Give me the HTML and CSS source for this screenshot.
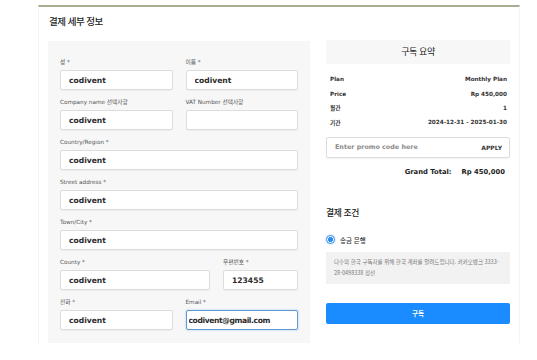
FILE: index.html
```html
<!DOCTYPE html>
<html lang="ko">
<head>
    <meta charset="UTF-8">
    <meta name="viewport" content="width=device-width, initial-scale=1.0">
    <title>결제 세부 정보</title>
    <link rel="stylesheet" href="styles.css">
</head>
<body>
    <div class="page">
        <h1 class="title">결제 세부 정보</h1>
        <div class="content">
            <form class="form-panel">
                <div class="row">
                    <div class="field">
                        <label>성 *</label>
                        <input class="form-control" type="text" value="codivent">
                    </div>
                    <div class="field">
                        <label>이름 *</label>
                        <input class="form-control" type="text" value="codivent">
                    </div>
                </div>
                <div class="row">
                    <div class="field">
                        <label>Company name 선택사항</label>
                        <input class="form-control" type="text" value="codivent">
                    </div>
                    <div class="field">
                        <label>VAT Number 선택사항</label>
                        <input class="form-control" type="text" value="">
                    </div>
                </div>
                <div class="row">
                    <div class="field">
                        <label>Country/Region *</label>
                        <input class="form-control" type="text" value="codivent">
                    </div>
                </div>
                <div class="row">
                    <div class="field">
                        <label>Street address *</label>
                        <input class="form-control" type="text" value="codivent">
                    </div>
                </div>
                <div class="row">
                    <div class="field">
                        <label>Town/City *</label>
                        <input class="form-control" type="text" value="codivent">
                    </div>
                </div>
                <div class="row">
                    <div class="field wide">
                        <label>County *</label>
                        <input class="form-control" type="text" value="codivent">
                    </div>
                    <div class="field narrow">
                        <label>우편번호 *</label>
                        <input class="form-control" type="text" value="123455">
                    </div>
                </div>
                <div class="row">
                    <div class="field">
                        <label>전화 *</label>
                        <input class="form-control" type="text" value="codivent">
                    </div>
                    <div class="field">
                        <label>Email *</label>
                        <input class="form-control focused" type="text" value="codivent@gmail.com">
                    </div>
                </div>
            </form>

            <div class="summary">
                <div class="summary-heading">구독 요약</div>
                <table class="summary-table">
                    <tr><td>Plan</td><td>Monthly Plan</td></tr>
                    <tr><td>Price</td><td>Rp 450,000</td></tr>
                    <tr><td>월간</td><td>1</td></tr>
                    <tr><td>기간</td><td>2024-12-31 - 2025-01-30</td></tr>
                </table>
                <div class="promo">
                    <span class="promo-text">Enter promo code here</span>
                    <span class="promo-apply">APPLY</span>
                </div>
                <div class="grand-total">
                    <span>Grand Total:</span>
                    <span>Rp 450,000</span>
                </div>

                <h2 class="terms-title">결제 조건</h2>
                <div class="radio-line">
                    <span class="radio"></span>
                    <span>송금 은행</span>
                </div>
                <div class="info-box">
                    다수의 한국 구독자를 위해 한국 계좌를 알려드립니다. 카카오뱅크 3333-28-0498338 정선
                </div>
                <button class="btn-subscribe" type="button">구독</button>
            </div>
        </div>
    </div>
</body>
</html>
```

FILE: styles.css
```css
body {
    margin: 0;
    background: #ffffff;
    font-family: "DejaVu Sans", "Noto Sans CJK KR", sans-serif;
    color: #222;
}

.page {
    width: 480px;
    height: 336px;
    margin: 5px 0 0 38px;
    border-top: 2px solid #a9ad90;
    border-left: 1px solid #f3f3f3;
    border-right: 1px solid #f3f3f3;
}

.title {
    margin: 0;
    padding: 6px 0 0 10px;
    height: 28px;
    font-family: "Noto Sans CJK KR", sans-serif;
    font-size: 9.5px;
    font-weight: 500;
    letter-spacing: -0.5px;
    line-height: 16px;
    color: #222;
}

.content {
    display: flex;
    gap: 16px;
    padding-left: 9px;
}

.form-panel {
    width: 238px;
    height: 272px;
    padding: 16px 12px 14px 12px;
    background: #f7f7f7;
}

.row {
    display: flex;
    gap: 13px;
    margin-bottom: 7px;
}

.field {
    flex: 1;
    display: flex;
    flex-direction: column;
    gap: 3px;
}

.field.wide {
    flex: 0 0 150px;
}

.field.narrow {
    flex: 0 0 75px;
}

.field label {
    height: 10px;
    font-size: 5.7px;
    line-height: 10px;
    color: #555;
}

.form-control {
    box-sizing: border-box;
    width: 100%;
    height: 20px;
    padding: 0 0 0 8px;
    border: 1px solid #dcdcdc;
    border-radius: 2px;
    background: #fff;
    font-family: "DejaVu Sans", sans-serif;
    font-size: 7.6px;
    font-weight: bold;
    color: #2a2a2a;
    box-shadow: 0 1px 1px rgba(0, 0, 0, 0.04);
}

.form-control.focused {
    padding-left: 2px;
    letter-spacing: -0.4px;
    border: 1px solid #5f9ad8;
    box-shadow: 0 0 2px rgba(80, 140, 220, 0.5);
}

.summary {
    width: 184px;
    margin-top: -1px;
}

.summary-heading {
    height: 24px;
    background: #f7f7f7;
    text-align: center;
    font-family: "Noto Sans CJK KR", sans-serif;
    font-size: 9px;
    letter-spacing: -0.4px;
    line-height: 24px;
    color: #222;
}

.summary-table {
    width: 100%;
    border-collapse: collapse;
    margin-top: 8px;
    font-size: 5.7px;
    font-weight: bold;
    color: #333;
}

.summary-table td {
    height: 14.4px;
    padding: 0 3px 0 4px;
}

.summary-table td:last-child {
    text-align: right;
}

.promo {
    box-sizing: border-box;
    display: flex;
    justify-content: space-between;
    align-items: center;
    height: 21px;
    margin-top: 7px;
    padding: 0 7px 0 8px;
    border: 1px solid #dcdcdc;
    border-radius: 2px;
    box-shadow: 0 1px 2px rgba(0, 0, 0, 0.06);
}

.promo-text {
    font-size: 6.4px;
    font-weight: bold;
    color: #8a8a8a;
}

.promo-apply {
    font-size: 6px;
    font-weight: bold;
    color: #333;
}

.grand-total {
    display: flex;
    justify-content: flex-end;
    gap: 10px;
    margin-top: 7px;
    padding-right: 5px;
    font-size: 6.8px;
    font-weight: bold;
    line-height: 14px;
    color: #222;
}

.terms-title {
    margin: 26px 0 0 0;
    font-family: "Noto Sans CJK KR", sans-serif;
    font-size: 8.8px;
    font-weight: 500;
    letter-spacing: -0.4px;
    line-height: 16px;
    color: #222;
}

.radio-line {
    display: flex;
    align-items: center;
    gap: 5px;
    margin-top: 14px;
    font-family: "Noto Sans CJK KR", sans-serif;
    font-size: 6.5px;
    font-weight: 500;
    color: #333;
}

.radio {
    box-sizing: border-box;
    width: 9px;
    height: 9px;
    border: 1.5px solid #2d8cf0;
    border-radius: 50%;
    background: radial-gradient(circle, #2d8cf0 0 2.2px, #fff 2.6px);
    box-shadow: 0 0 2px rgba(45, 140, 240, 0.5);
}

.info-box {
    box-sizing: border-box;
    height: 32px;
    margin-top: 7px;
    padding: 5px 8px 0 8px;
    background: #f2f2f2;
    font-family: "Noto Sans CJK KR", sans-serif;
    font-size: 5.5px;
    line-height: 11px;
    word-break: keep-all;
    color: #777;
}

.btn-subscribe {
    display: block;
    width: 100%;
    height: 21px;
    margin-top: 19px;
    border: none;
    border-radius: 2px;
    background: #1a8cff;
    font-family: "Noto Sans CJK KR", sans-serif;
    font-size: 6.5px;
    font-weight: bold;
    color: #fff;
}
```
